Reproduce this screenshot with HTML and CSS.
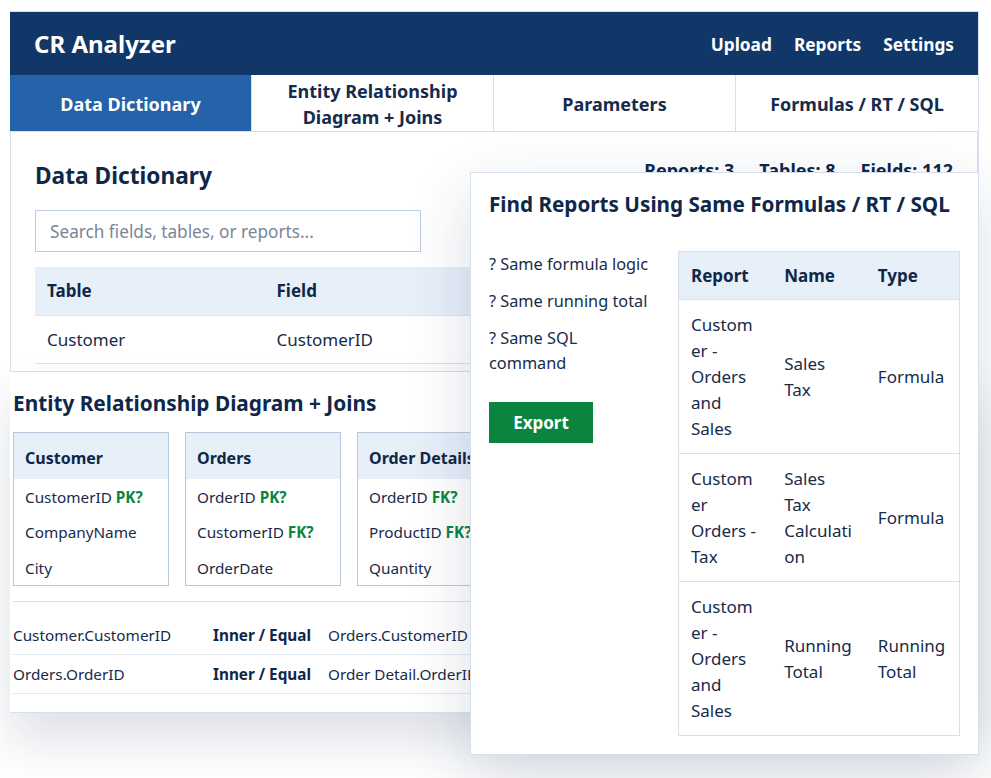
FILE: index.html
```html
<!DOCTYPE html>
<html lang="en">
  <head>
    <meta charset="UTF-8" />
    <meta name="viewport" content="width=device-width, initial-scale=1.0" />
    <title>CR Analyzer</title>
    <link rel="stylesheet" href="styles.css">
  </head>
  <body>
    <div class="app">
      <header class="topbar">
        <div class="brand">CR Analyzer</div>
        <nav class="nav">
          <a href="#">Upload</a>
          <a href="#">Reports</a>
          <a href="#">Settings</a>
        </nav>
      </header>

      <div class="tabs">
        <button class="tab active">Data Dictionary</button>
        <button class="tab">Entity Relationship Diagram + Joins</button>
        <button class="tab">Parameters</button>
        <button class="tab">Formulas / RT / SQL</button>
      </div>

      <section class="panel dict">
        <div class="dict-head">
          <h2>Data Dictionary</h2>
          <div class="stats">
            <span>Reports: 3</span>
            <span>Tables: 8</span>
            <span>Fields: 112</span>
          </div>
        </div>
        <input class="search" type="text" placeholder="Search fields, tables, or reports...">
        <table class="grid">
          <thead>
            <tr><th>Table</th><th>Field</th><th>Type</th><th>Reports</th></tr>
          </thead>
          <tbody>
            <tr><td>Customer</td><td>CustomerID</td><td>Number</td><td>3</td></tr>
          </tbody>
        </table>
      </section>

      <section class="erd">
        <h3>Entity Relationship Diagram + Joins</h3>
        <div class="entities">
          <div class="entity">
            <div class="entity-head">Customer</div>
            <div class="entity-row">CustomerID <b class="key">PK?</b></div>
            <div class="entity-row">CompanyName</div>
            <div class="entity-row">City</div>
          </div>
          <div class="entity">
            <div class="entity-head">Orders</div>
            <div class="entity-row">OrderID <b class="key">PK?</b></div>
            <div class="entity-row">CustomerID <b class="key">FK?</b></div>
            <div class="entity-row">OrderDate</div>
          </div>
          <div class="entity">
            <div class="entity-head">Order Details</div>
            <div class="entity-row">OrderID <b class="key">FK?</b></div>
            <div class="entity-row">ProductID <b class="key">FK?</b></div>
            <div class="entity-row">Quantity</div>
          </div>
          <div class="entity">
            <div class="entity-head">Products</div>
            <div class="entity-row">ProductID <b class="key">PK?</b></div>
            <div class="entity-row">ProductName</div>
            <div class="entity-row">UnitPrice</div>
          </div>
        </div>
        <div class="joins">
          <table>
            <tr><td class="j-from">Customer.CustomerID</td><td class="j-type">Inner / Equal</td><td>Orders.CustomerID</td></tr>
            <tr><td class="j-from">Orders.OrderID</td><td class="j-type">Inner / Equal</td><td>Order Detail.OrderID</td></tr>
          </table>
        </div>
      </section>

      <div class="finder">
        <h3>Find Reports Using Same Formulas / RT / SQL</h3>
        <div class="finder-body">
          <div class="finder-opts">
            <p>? Same formula logic</p>
            <p>? Same running total</p>
            <p>? Same SQL command</p>
            <button class="export">Export</button>
          </div>
          <table class="matches">
            <thead>
              <tr><th>Report</th><th>Name</th><th>Type</th></tr>
            </thead>
            <tbody>
              <tr><td>Customer - Orders and Sales</td><td>Sales Tax</td><td>Formula</td></tr>
              <tr><td>Customer Orders - Tax</td><td>Sales Tax Calculation</td><td>Formula</td></tr>
              <tr><td>Customer - Orders and Sales</td><td>Running Total</td><td>Running Total</td></tr>
            </tbody>
          </table>
        </div>
      </div>
    </div>
  </body>
</html>
```

FILE: styles.css
```css
* {
  box-sizing: border-box;
}
html,
body {
  min-height: 100%;
}
body {
  margin: 0;
  min-height: 100vh;
  background: #fff;
  font-family: "Noto Sans", "Open Sans", sans-serif;
  font-size: 17px;
  color: #172b4a;
}
.app {
  position: relative;
  width: 969px;
  margin: 11px 0 0 10px;
  border-top: 1px solid #d6e0ec;
  border-right: 1px solid #d6e0ec;
}
.topbar {
  display: flex;
  justify-content: space-between;
  align-items: center;
  height: 63px;
  padding: 0 24px;
  background: #113768;
  color: #fff;
}
.brand {
  font-size: 24px;
  font-weight: 700;
}
.nav {
  display: flex;
  gap: 22px;
  padding-top: 2px;
}
.nav a {
  color: #fff;
  font-size: 17.3px;
  font-weight: 700;
  text-decoration: none;
}
.tabs {
  display: grid;
  grid-template-columns: repeat(4, 1fr);
  height: 57px;
}
.tab {
  display: flex;
  align-items: center;
  justify-content: center;
  padding: 2px 20px 0;
  background: #fff;
  border: none;
  border-right: 1px solid #d6e0ec;
  border-bottom: 1px solid #d6e0ec;
  font: inherit;
  font-size: 18px;
  font-weight: 700;
  line-height: 26px;
  color: #172b4a;
  cursor: pointer;
}
.tab:last-child {
  border-right: none;
}
.tab.active {
  background: #2462a9;
  color: #fff;
}
.panel {
  border: 1px solid #d6e0ec;
  border-top: none;
}
.dict {
  padding: 26px 24px 7px;
}
.dict-head {
  display: flex;
  justify-content: space-between;
  align-items: flex-start;
}
.dict-head h2 {
  margin: 0;
  font-size: 22.7px;
  line-height: 36px;
  color: #0f2748;
}
.stats {
  display: flex;
  gap: 25px;
  font-size: 18px;
  font-weight: 700;
  line-height: 24px;
  color: #0f2748;
}
.search {
  display: block;
  width: 386px;
  height: 42px;
  margin-top: 16px;
  padding: 0 14px;
  border: 1px solid #bfcde0;
  font: inherit;
  font-size: 17.2px;
  color: #172b4a;
}
.search::placeholder {
  color: #7b8598;
}
.grid {
  width: 100%;
  margin-top: 15px;
  border-collapse: collapse;
  table-layout: fixed;
}
.grid th,
.grid td {
  height: 48px;
  padding: 0 12px;
  text-align: left;
  border-bottom: 1px solid #dbe4ef;
}
.grid th {
  background: #e7eff9;
  color: #0f2748;
}
.erd {
  padding: 17px 3px 18px;
  border-bottom: 1px solid #d6e0ec;
  box-shadow: 0 28px 46px rgba(20, 44, 80, 0.14);
}
.erd h3 {
  margin: 0 0 15px;
  font-size: 20.8px;
  line-height: 28px;
  color: #0f2748;
}
.entities {
  display: flex;
  gap: 16px;
}
.entity {
  flex: none;
  width: 156px;
  border: 1px solid #b8c8dc;
  font-size: 15.3px;
}
.entity-head {
  display: flex;
  align-items: center;
  height: 46px;
  padding: 5px 11px 0;
  background: #e7eff9;
  font-size: 16px;
  font-weight: 700;
  color: #0f2748;
  white-space: nowrap;
}
.entity-row {
  height: 35.6px;
  padding: 1px 11px 0;
  line-height: 35px;
  white-space: nowrap;
}
.key {
  color: #0b843f;
}
.joins {
  margin-top: 15px;
  padding-top: 13px;
  border-top: 1px solid #d6e0ec;
}
.joins table {
  width: 100%;
  border-collapse: collapse;
  font-size: 15.3px;
}
.joins td {
  height: 39px;
  padding: 0;
  border-bottom: 1px solid #e1e8f1;
  white-space: nowrap;
}
.joins .j-from {
  width: 200px;
}
.joins .j-type {
  width: 115px;
  font-weight: 700;
  color: #0f2748;
}
.finder {
  position: absolute;
  left: 460px;
  top: 160px;
  width: 509px;
  padding: 17px 18px 18px;
  background: #fff;
  border: 1px solid #d6e0ec;
  box-shadow: 0 22px 60px rgba(20, 44, 80, 0.16);
}
.finder h3 {
  margin: 0 0 33px;
  font-size: 20.7px;
  line-height: 28px;
  color: #0f2748;
  white-space: nowrap;
}
.finder-body {
  display: grid;
  grid-template-columns: 162px 282px;
  justify-content: space-between;
  align-items: start;
}
.finder-opts {
  padding-top: 1px;
  font-size: 16.3px;
}
.finder-opts p {
  margin: 0 0 12px;
  line-height: 25px;
}
.export {
  width: 104px;
  height: 41px;
  margin-top: 14px;
  border: none;
  background: #0b843f;
  color: #fff;
  font: inherit;
  font-size: 17px;
  font-weight: 700;
  cursor: pointer;
}
.matches {
  width: 282px;
  border-collapse: collapse;
  table-layout: fixed;
  border: 1px solid #d6e0ec;
}
.matches th,
.matches td {
  padding: 11.5px 12px;
  text-align: left;
  overflow-wrap: anywhere;
}
.matches th {
  line-height: 24px;
  background: #e7eff9;
  color: #0f2748;
}
.matches td {
  line-height: 26px;
  border-top: 1px solid #d6e0ec;
}
```
